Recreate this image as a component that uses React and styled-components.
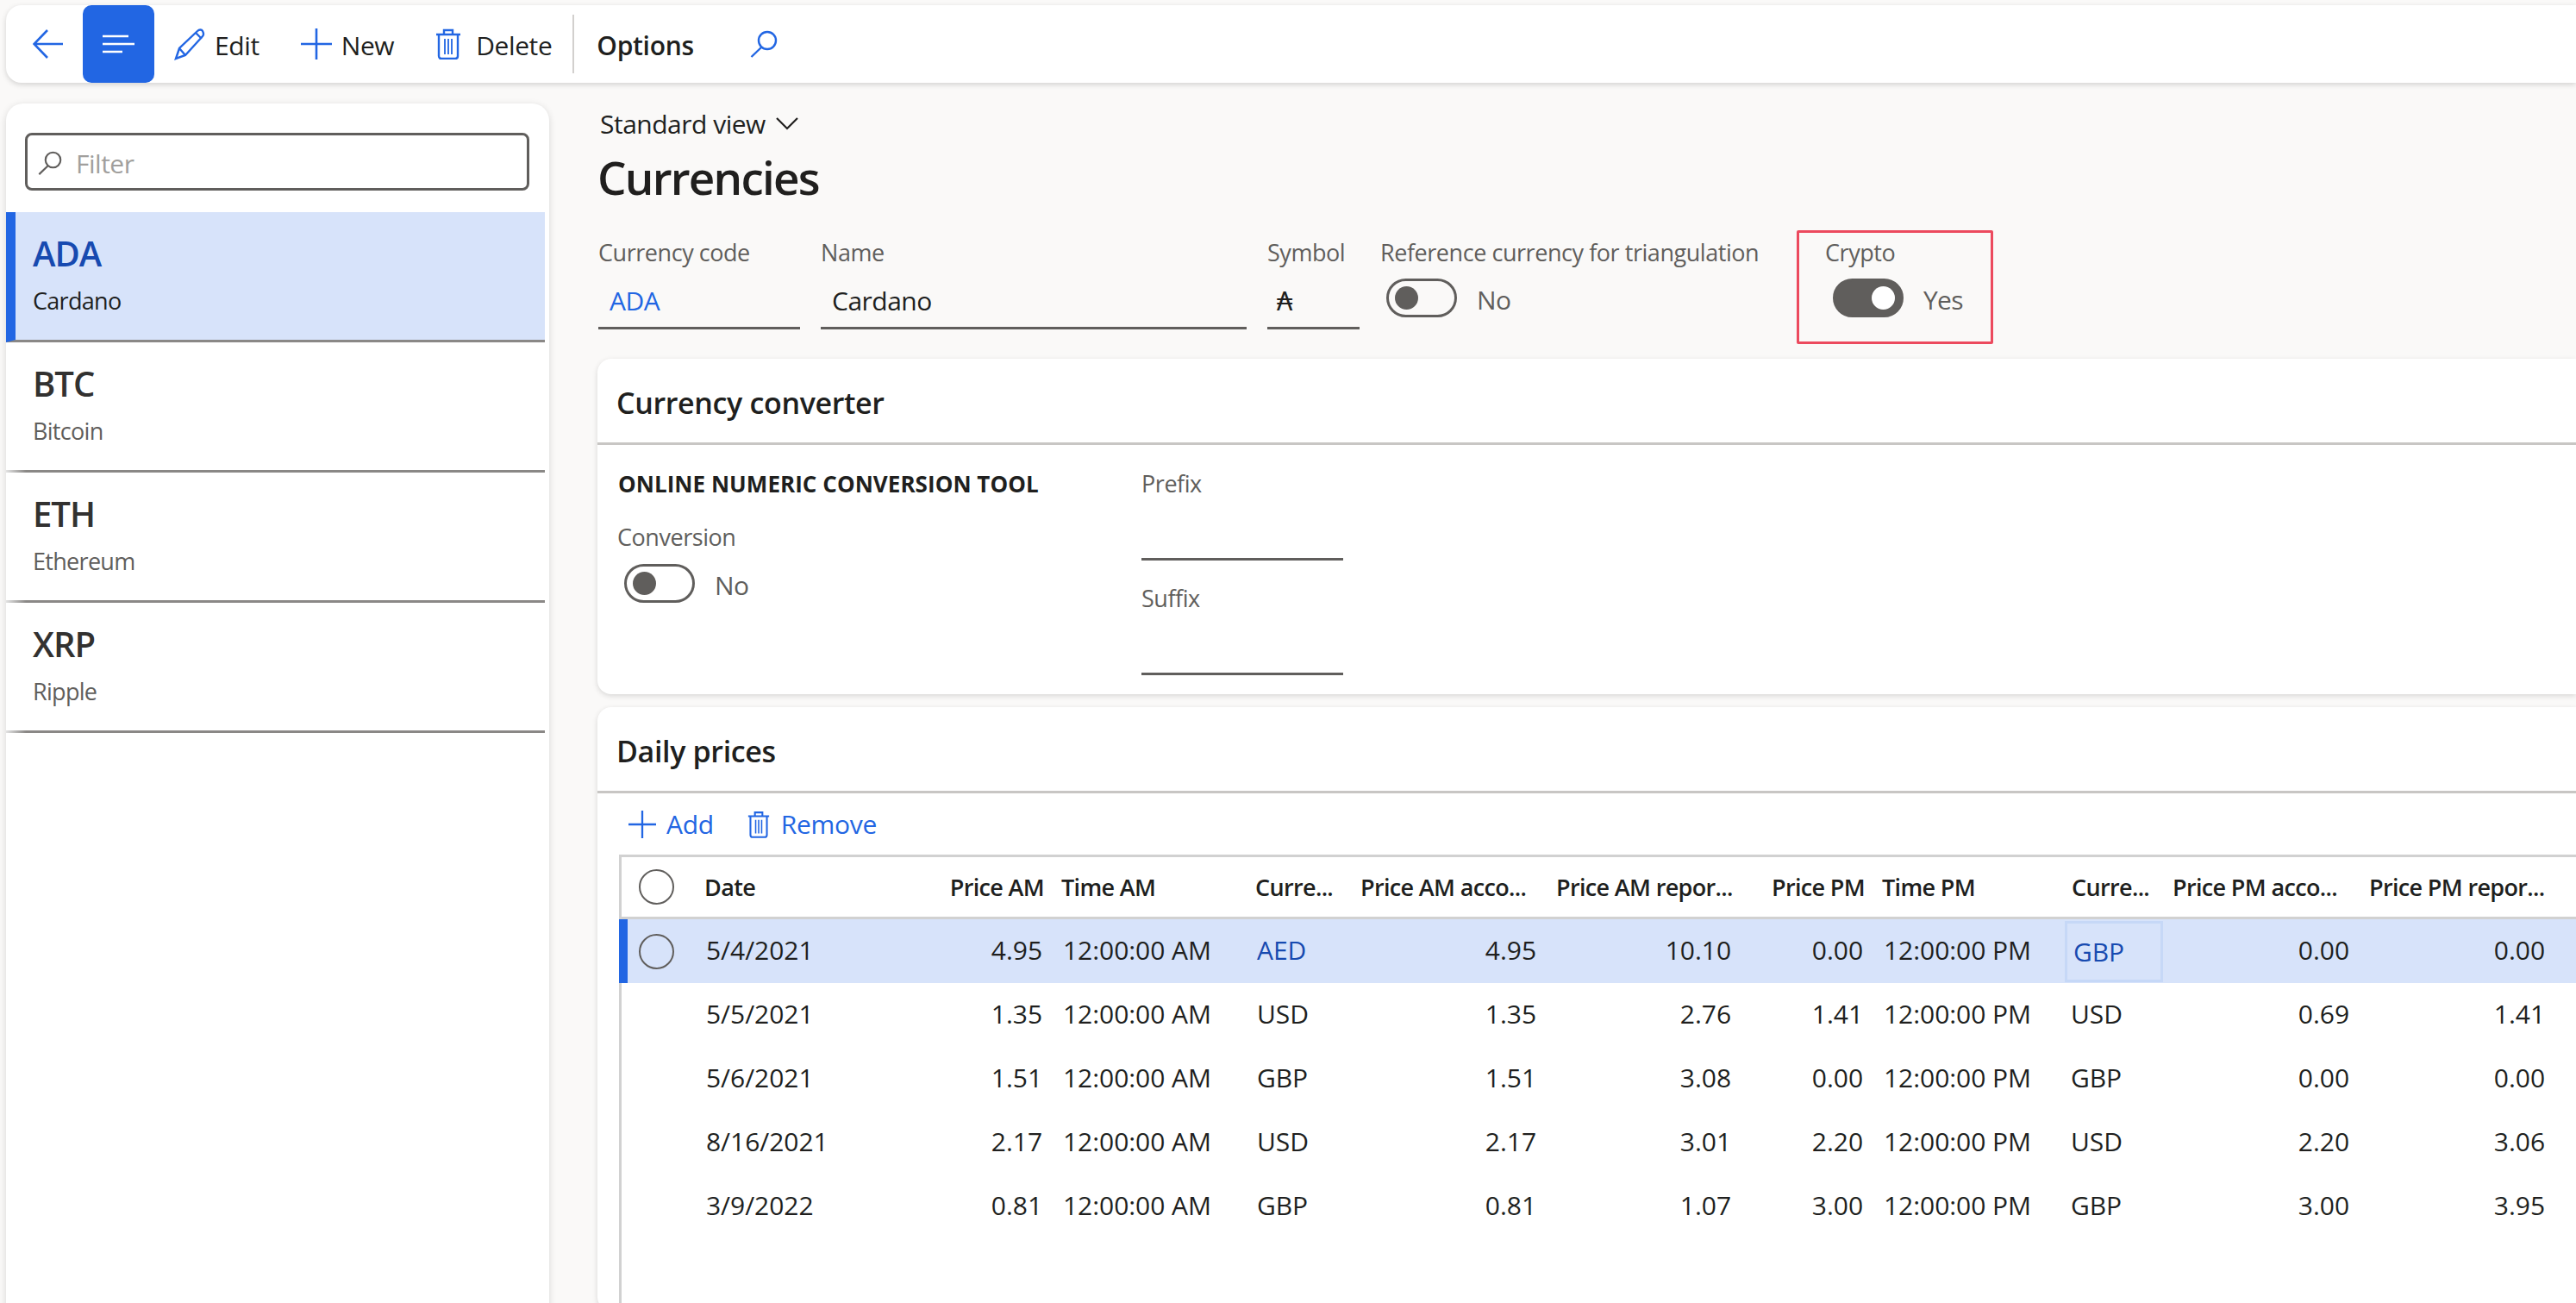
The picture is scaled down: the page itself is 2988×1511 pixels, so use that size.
import React from 'react';
import styled, { createGlobalStyle } from 'styled-components';

const BLUE = '#2266e3';
const LINK = '#174ab0';
const GREY = '#605e5c';
const TEXT = '#201f1e';
const COLS = '83px 290px 130px 226px 121px 226px 229px 150px 222px 114px 228px 224px';

const GlobalStyle = createGlobalStyle`
  html, body {
    margin: 0;
    padding: 0;
    background: #faf9f8;
  }
  body {
    font-family: "Open Sans", "Noto Sans", "Liberation Sans", sans-serif;
    color: ${TEXT};
  }
  * {
    box-sizing: border-box;
  }
`;

const Page = styled.div`
  width: 2988px;
  height: 1511px;
  overflow: hidden;
  padding: 6px 0 0 7px;
  background: #faf9f8;
`;

const Toolbar = styled.div`
  display: flex;
  align-items: center;
  width: 2981px;
  height: 90px;
  background: #fff;
  border-radius: 18px 0 0 18px;
  box-shadow: 0 2px 6px rgba(0, 0, 0, 0.16);
  padding-left: 31px;
`;

const BackButton = styled.div`
  display: flex;
  width: 58px;
`;

const MenuButton = styled.div`
  width: 83px;
  height: 90px;
  background: ${BLUE};
  border-radius: 10px;
  display: flex;
  align-items: center;
  justify-content: center;
  margin-right: 23px;
`;

const ToolButton = styled.div`
  display: flex;
  align-items: center;
  gap: ${(p) => p.$gap || 11}px;
  margin-right: ${(p) => p.$after || 0}px;
  font-size: 30px;
  letter-spacing: -0.4px;
  color: ${TEXT};
  white-space: nowrap;
`;

const ToolLabel = styled.span`
  padding-top: 3px;
`;

const ToolSep = styled.div`
  width: 2px;
  height: 68px;
  background: #d2d0ce;
  margin-right: 26px;
`;

const OptionsLabel = styled.div`
  padding-top: 3px;
  font-size: 30px;
  font-weight: 600;
  letter-spacing: -0.3px;
  margin-right: 65px;
`;

const Columns = styled.div`
  display: flex;
  align-items: flex-start;
`;

const Sidebar = styled.aside`
  flex: none;
  width: 630px;
  height: 1400px;
  margin-top: 24px;
  background: #fff;
  border-radius: 20px 20px 0 0;
  box-shadow: 0 2px 8px rgba(0, 0, 0, 0.14);
  padding-top: 34px;
`;

const FilterBox = styled.div`
  display: flex;
  align-items: center;
  gap: 16px;
  width: 585px;
  height: 67px;
  margin: 0 0 25px 22px;
  padding: 3px 0 0 12px;
  border: 3px solid ${GREY};
  border-radius: 8px;
  font-size: 30px;
  letter-spacing: -0.5px;
  color: #a19f9d;
`;

const ListRow = styled.div`
  width: 625px;
  height: 151px;
  padding: 24px 0 0 ${(p) => (p.$active ? 20 : 31)}px;
  border-left: ${(p) => (p.$active ? `11px solid ${BLUE}` : 'none')};
  border-bottom: 3px solid #8a8886;
  border-image: ${(p) => (p.$active ? 'none' : 'linear-gradient(90deg, #e6e6e6, #8a8886 24px) 1')};
  background: ${(p) => (p.$active ? '#d7e3fa' : 'transparent')};
`;

const ListCode = styled.div`
  font-size: 40px;
  line-height: 48px;
  font-weight: 600;
  letter-spacing: -1px;
  color: ${(p) => (p.$active ? LINK : '#323130')};
`;

const ListName = styled.div`
  margin-top: 14px;
  font-size: 27px;
  line-height: 34px;
  letter-spacing: -0.7px;
  color: ${(p) => (p.$active ? TEXT : GREY)};
`;

const Main = styled.main`
  flex: none;
  width: 2295px;
  margin-left: 56px;
  padding-top: 29px;
`;

const ViewSelector = styled.div`
  display: flex;
  align-items: center;
  gap: 12px;
  height: 36px;
  font-size: 30px;
  letter-spacing: -0.5px;
  padding-left: 3px;
`;

const PageTitle = styled.h1`
  margin: 13px 0 0;
  height: 64px;
  font-size: 53px;
  line-height: 64px;
  font-weight: 600;
  letter-spacing: -1.8px;
`;

const FieldRow = styled.div`
  display: flex;
  gap: 24px;
  margin-top: 38px;
  padding-left: 1px;
`;

const Field = styled.div`
  position: relative;
  flex: none;
  width: ${(p) => p.$width}px;
`;

const Label = styled.div`
  height: 34px;
  font-size: 27px;
  line-height: 34px;
  letter-spacing: -0.45px;
  color: ${GREY};
  white-space: nowrap;
`;

const Input = styled.div`
  height: 72px;
  padding: 19px 0 0 ${(p) => p.$pad || 13}px;
  border-bottom: 3px solid ${GREY};
  font-size: 30px;
  line-height: 40px;
  letter-spacing: -0.5px;
  color: ${(p) => (p.$link ? BLUE : TEXT)};
`;

const ToggleRow = styled.div`
  display: flex;
  align-items: center;
  gap: 23px;
  margin: ${(p) => p.$top || 12}px 0 0 ${(p) => p.$left}px;
  font-size: 30px;
  letter-spacing: -0.7px;
  color: ${GREY};
`;

const ToggleText = styled.span`
  padding-top: 5px;
`;

const Track = styled.div`
  display: flex;
  align-items: center;
  justify-content: ${(p) => (p.$on ? 'flex-end' : 'flex-start')};
  width: 82px;
  height: 45px;
  padding: 0 7px;
  border: 3px solid ${GREY};
  border-radius: 23px;
  background: ${(p) => (p.$on ? GREY : 'transparent')};
`;

const Thumb = styled.div`
  width: 27px;
  height: 27px;
  border-radius: 50%;
  background: ${(p) => (p.$on ? '#fff' : GREY)};
`;

const RedMark = styled.div`
  position: absolute;
  left: -33px;
  top: -9px;
  width: 228px;
  height: 132px;
  border: 3px solid #ec4a5e;
  border-radius: 2px;
  pointer-events: none;
`;

const Card = styled.section`
  margin-top: ${(p) => p.$top}px;
  height: ${(p) => p.$height}px;
  background: #fff;
  border-radius: 16px 0 0 16px;
  box-shadow: 0 2px 6px rgba(0, 0, 0, 0.14);
`;

const CardHeader = styled.div`
  display: flex;
  align-items: center;
  height: 100px;
  padding: 4px 0 0 22px;
  border-bottom: 3px solid #c8c6c4;
  font-size: 34px;
  font-weight: 600;
  letter-spacing: -0.35px;
`;

const ConverterBody = styled.div`
  display: flex;
  padding: 28px 0 0 24px;
`;

const ConverterLeft = styled.div`
  width: 607px;
`;

const GroupHeading = styled.div`
  height: 34px;
  font-size: 26px;
  line-height: 34px;
  font-weight: 700;
  letter-spacing: 0.05px;
`;

const ConversionLabel = styled(Label)`
  margin-top: 28px;
  margin-left: -1px;
`;

const ConverterRight = styled.div`
  width: 234px;
`;

const SuffixLabel = styled(Label)`
  margin-top: 27px;
`;

const GridActions = styled.div`
  display: flex;
  align-items: center;
  height: 71px;
  padding-left: 36px;
`;

const GridAction = styled.div`
  display: flex;
  align-items: center;
  gap: ${(p) => p.$gap || 12}px;
  margin-right: ${(p) => p.$after || 0}px;
  font-size: 30px;
  letter-spacing: -0.3px;
  color: ${BLUE};
`;

const Grid = styled.div`
  margin-left: 25px;
  height: 560px;
  border-top: 3px solid #d1d1d1;
  border-left: 3px solid #d1d1d1;
`;

const HeadRow = styled.div`
  display: grid;
  grid-template-columns: ${COLS};
  align-items: center;
  height: 72px;
  margin-left: -3px;
  border-bottom: 3px solid #d1d1d1;
`;

const Row = styled.div`
  display: grid;
  grid-template-columns: ${COLS};
  align-items: center;
  height: 74px;
  margin-left: -3px;
  background: ${(p) => (p.$active ? '#d7e3fa' : 'transparent')};
  box-shadow: ${(p) => (p.$active ? `inset 10px 0 0 ${BLUE}` : 'none')};
`;

const CheckCell = styled.div`
  display: flex;
  padding-left: 23px;
`;

const Circle = styled.div`
  width: 41px;
  height: 41px;
  border-radius: 50%;
  border: 2px solid ${GREY};
`;

const HeadCell = styled.div`
  padding: 0 ${(p) => (p.$right ? 10 : 0)}px 0 ${(p) => (p.$right ? 0 : p.$pad || 10)}px;
  text-align: ${(p) => (p.$right ? 'right' : 'left')};
  font-size: 27px;
  font-weight: 600;
  letter-spacing: -0.65px;
  white-space: nowrap;
`;

const Cell = styled.div`
  display: flex;
  align-items: center;
  justify-content: ${(p) => (p.$right ? 'flex-end' : 'flex-start')};
  height: ${(p) => (p.$focus ? '71px' : '70px')};
  margin-bottom: ${(p) => (p.$focus ? 0 : 3)}px;
  padding: 0 ${(p) => (p.$right ? p.$end || 12 : 0)}px 0 ${(p) => (p.$right ? 0 : p.$pad || 12)}px;
  border: ${(p) => (p.$focus ? '3px solid #c6d8f7' : 'none')};
  font-size: 30px;
  letter-spacing: -0.05px;
  color: ${(p) => (p.$link ? LINK : TEXT)};
  white-space: nowrap;
`;

const BackIcon = () => (
  <svg width="36" height="34" viewBox="0 0 36 34" fill="none" stroke={BLUE} strokeWidth="2.6">
    <path d="M35 17H2M17 1 1.5 17 17 33" />
  </svg>
);

const MenuIcon = () => (
  <svg width="37" height="22" viewBox="0 0 37 22" fill="none" stroke="#fff" strokeWidth="2.6">
    <path d="M0 2h30M0 11h37M0 20h23" />
  </svg>
);

const PencilIcon = () => (
  <svg width="36" height="37" viewBox="0 0 36 37" fill="none" stroke={BLUE} strokeWidth="2.4">
    <path d="M2 35 6 23 27 3c2-2 5-2 6 0s2 4 0 6L13 31ZM6 23l7 8M25 5l7 7" />
  </svg>
);

const PlusIcon = ({ size = 36 }) => (
  <svg width={size} height={size} viewBox="0 0 36 36" fill="none" stroke={BLUE} strokeWidth="2.6">
    <path d="M0 18h36M18 0v36" />
  </svg>
);

const TrashIcon = ({ width = 30, height = 36 }) => (
  <svg width={width} height={height} viewBox="0 0 30 36" fill="none" stroke={BLUE} strokeWidth="2.4">
    <path d="M1 7h28M10 6V2h10v4M4 7v25c0 2 1 3 3 3h16c2 0 3-1 3-3V7" />
    <path strokeWidth="1.8" d="M11 12v18M15 12v18M19 12v18" />
  </svg>
);

const SearchIcon = ({ color = BLUE, size = 32 }) => (
  <svg width={size} height={size} viewBox="0 0 32 32" fill="none" stroke={color} strokeWidth="2.4">
    <circle cx="20" cy="12" r="10" />
    <path d="M13 20 1.5 31" />
  </svg>
);

const ChevronIcon = () => (
  <svg width="26" height="15" viewBox="0 0 26 15" fill="none" stroke={TEXT} strokeWidth="2.2">
    <path d="M1 1l12 12L25 1" />
  </svg>
);

const Toggle = ({ on, label, left, top }) => (
  <ToggleRow $left={left} $top={top}>
    <Track $on={on}>
      <Thumb $on={on} />
    </Track>
    <ToggleText>{label}</ToggleText>
  </ToggleRow>
);

const currencies = [
  { code: 'ADA', name: 'Cardano', active: true },
  { code: 'BTC', name: 'Bitcoin' },
  { code: 'ETH', name: 'Ethereum' },
  { code: 'XRP', name: 'Ripple' },
];

const prices = [
  ['5/4/2021', '4.95', 'AED', '4.95', '10.10', '0.00', 'GBP', '0.00', '0.00'],
  ['5/5/2021', '1.35', 'USD', '1.35', '2.76', '1.41', 'USD', '0.69', '1.41'],
  ['5/6/2021', '1.51', 'GBP', '1.51', '3.08', '0.00', 'GBP', '0.00', '0.00'],
  ['8/16/2021', '2.17', 'USD', '2.17', '3.01', '2.20', 'USD', '2.20', '3.06'],
  ['3/9/2022', '0.81', 'GBP', '0.81', '1.07', '3.00', 'GBP', '3.00', '3.95'],
];

const App = () => {
  return (
    <Page>
      <GlobalStyle />
      <Toolbar>
        <BackButton>
          <BackIcon />
        </BackButton>
        <MenuButton>
          <MenuIcon />
        </MenuButton>
        <ToolButton $after={48}>
          <PencilIcon />
          <ToolLabel>Edit</ToolLabel>
        </ToolButton>
        <ToolButton $after={48}>
          <PlusIcon />
          <ToolLabel>New</ToolLabel>
        </ToolButton>
        <ToolButton $gap={17} $after={24}>
          <TrashIcon />
          <ToolLabel>Delete</ToolLabel>
        </ToolButton>
        <ToolSep />
        <OptionsLabel>Options</OptionsLabel>
        <SearchIcon />
      </Toolbar>

      <Columns>
        <Sidebar>
          <FilterBox>
            <SearchIcon color={GREY} size={28} />
            Filter
          </FilterBox>
          {currencies.map((c) => (
            <ListRow key={c.code} $active={c.active}>
              <ListCode $active={c.active}>{c.code}</ListCode>
              <ListName $active={c.active}>{c.name}</ListName>
            </ListRow>
          ))}
        </Sidebar>

        <Main>
          <ViewSelector>
            Standard view
            <ChevronIcon />
          </ViewSelector>
          <PageTitle>Currencies</PageTitle>

          <FieldRow>
            <Field $width={234}>
              <Label>Currency code</Label>
              <Input $link>ADA</Input>
            </Field>
            <Field $width={494}>
              <Label>Name</Label>
              <Input>Cardano</Input>
            </Field>
            <Field $width={107}>
              <Label>Symbol</Label>
              <Input $pad={11}>₳</Input>
            </Field>
            <Field $width={492}>
              <Label>Reference currency for triangulation</Label>
              <Toggle left={7} label="No" />
            </Field>
            <Field $width={200}>
              <RedMark />
              <Label>Crypto</Label>
              <Toggle on left={9} label="Yes" />
            </Field>
          </FieldRow>

          <Card $top={34} $height={389}>
            <CardHeader>Currency converter</CardHeader>
            <ConverterBody>
              <ConverterLeft>
                <GroupHeading>ONLINE NUMERIC CONVERSION TOOL</GroupHeading>
                <ConversionLabel>Conversion</ConversionLabel>
                <Toggle left={7} top={13} label="No" />
              </ConverterLeft>
              <ConverterRight>
                <Label>Prefix</Label>
                <Input />
                <SuffixLabel>Suffix</SuffixLabel>
                <Input />
              </ConverterRight>
            </ConverterBody>
          </Card>

          <Card $top={15} $height={700}>
            <CardHeader>Daily prices</CardHeader>
            <GridActions>
              <GridAction $after={39}>
                <PlusIcon size={32} />
                Add
              </GridAction>
              <GridAction $gap={13}>
                <TrashIcon width={26} height={32} />
                Remove
              </GridAction>
            </GridActions>
            <Grid>
              <HeadRow>
                <CheckCell>
                  <Circle />
                </CheckCell>
                <HeadCell $pad={16}>Date</HeadCell>
                <HeadCell $right>Price AM</HeadCell>
                <HeadCell>Time AM</HeadCell>
                <HeadCell $pad={9}>Curre...</HeadCell>
                <HeadCell $pad={10}>Price AM acco...</HeadCell>
                <HeadCell $pad={11}>Price AM repor...</HeadCell>
                <HeadCell $right>Price PM</HeadCell>
                <HeadCell>Time PM</HeadCell>
                <HeadCell $pad={8}>Curre...</HeadCell>
                <HeadCell $pad={11}>Price PM acco...</HeadCell>
                <HeadCell $pad={11}>Price PM repor...</HeadCell>
              </HeadRow>
              {prices.map((p, i) => (
                <Row key={p[0]} $active={i === 0}>
                  <CheckCell>{i === 0 && <Circle />}</CheckCell>
                  <Cell $pad={18}>{p[0]}</Cell>
                  <Cell $right>{p[1]}</Cell>
                  <Cell>12:00:00 AM</Cell>
                  <Cell $pad={11} $link={i === 0}>{p[2]}</Cell>
                  <Cell $right>{p[3]}</Cell>
                  <Cell $right $end={15}>{p[4]}</Cell>
                  <Cell $right>{p[5]}</Cell>
                  <Cell>12:00:00 PM</Cell>
                  <Cell $pad={7} $link={i === 0} $focus={i === 0}>{p[6]}</Cell>
                  <Cell $right>{p[7]}</Cell>
                  <Cell $right $end={9}>{p[8]}</Cell>
                </Row>
              ))}
            </Grid>
          </Card>
        </Main>
      </Columns>
    </Page>
  );
};

export default App;
